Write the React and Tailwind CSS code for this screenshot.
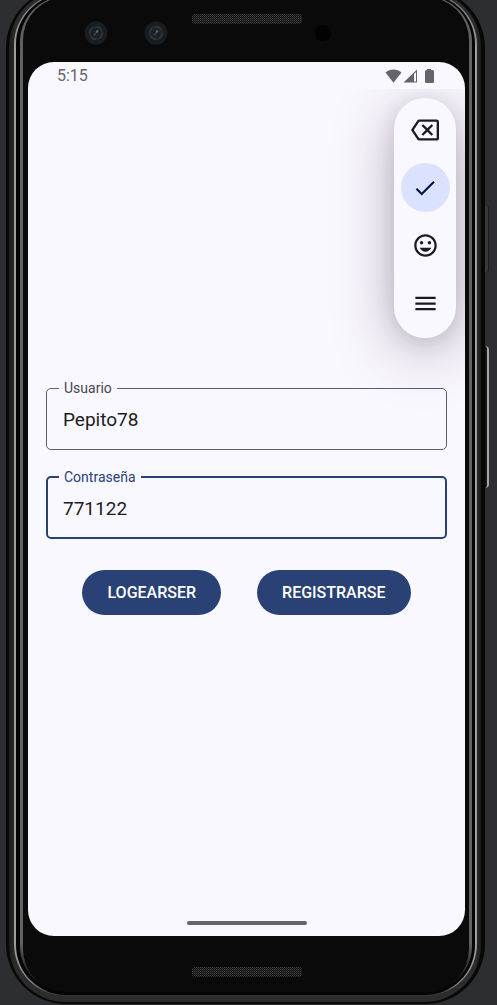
import { useState } from "react";
import { MdOutlineBackspace, MdCheck, MdMood, MdMenu } from "react-icons/md";

function CameraLens() {
  return (
    <svg className="size-6" viewBox="0 0 24 24" aria-hidden="true">
      <circle cx="12" cy="12" r="11.5" fill="#171d21" />
      <circle cx="12" cy="12" r="7.5" fill="#24282b" />
      <circle cx="12" cy="12" r="6.5" fill="none" stroke="#3c3e42" strokeWidth="1" strokeDasharray="6 4" />
      <circle cx="12" cy="12" r="4.5" fill="#1b1e22" />
      <path d="M10 14.5 14 9.5" stroke="#3c424c" strokeWidth="1.5" />
      <circle cx="13" cy="10.5" r="1.2" fill="#5d6574" />
    </svg>
  );
}

function Speaker() {
  return (
    <svg className="h-2.5 w-[110px]" aria-hidden="true">
      <defs>
        <pattern id="mesh" width="2" height="2" patternUnits="userSpaceOnUse">
          <rect width="2" height="2" fill="#101010" />
          <rect width="1" height="1" fill="#444444" />
          <rect x="1" y="1" width="1" height="1" fill="#2c2c2c" />
        </pattern>
      </defs>
      <rect width="110" height="10" rx="3" fill="url(#mesh)" />
    </svg>
  );
}

function StatusBar() {
  return (
    <div className="flex h-[27px] items-center justify-between pr-[30px] pl-[29px] text-[#656469]">
      <span className="text-[16px] leading-5">5:15</span>
      <svg className="h-3.5 w-[50px]" viewBox="0 0 50 14" fill="currentColor" aria-hidden="true">
        <path d="M0.5 3.6C4.8-.6 12.200-.6 16.500 3.600L8.500 13.700Z" />
        <path d="M18.500 13.500 32 0.500V13.500ZM29 5V12.500H31V3Z" fillRule="evenodd" />
        <path d="M42 0H46V1H47.500Q49 1 49 2.500V12.500Q49 14 47.500 14H41.500Q40 14 40 12.500V2.500Q40 1 41.500 1H42Z" />
      </svg>
    </div>
  );
}

function KeyboardToolbar() {
  return (
    <div
      role="toolbar"
      aria-label="Teclado"
      className="absolute top-[9px] right-[9px] z-10 flex w-[62px] flex-col items-center gap-[9px] rounded-full bg-[#faf8ff] pt-[7px] pb-[10px] text-[#1a1b21] shadow-[0_12px_60px_rgba(50,30,50,0.34),0_4px_20px_rgba(50,30,50,0.12)]"
    >
      <button type="button" aria-label="Borrar" className="flex size-[49px] items-center justify-center rounded-full">
        <MdOutlineBackspace className="size-7" />
      </button>
      <button type="button" aria-label="Aceptar" className="flex size-[49px] items-center justify-center rounded-full bg-[#dae2ff] text-[#001848]">
        <MdCheck className="size-[26px]" />
      </button>
      <button type="button" aria-label="Emoji" className="flex size-[49px] items-center justify-center rounded-full">
        <MdMood className="size-[27px]" />
      </button>
      <button type="button" aria-label="Menú" className="flex size-[49px] items-center justify-center rounded-full">
        <MdMenu className="size-[27px]" />
      </button>
    </div>
  );
}

function OutlinedField({ id, label, value, onChange, active }) {
  return (
    <fieldset
      className={
        active
          ? "min-w-0 rounded-[5px] border-2 border-[#294174] px-[15px] pb-[7px]"
          : "min-w-0 rounded-[5px] border border-[#5f5e66] px-4 pb-2"
      }
    >
      <legend className="-ml-1 px-[5px] text-[14px] leading-[18px]">
        <label htmlFor={id} className={active ? "block text-[#294174]" : "block text-[#45464f]"}>
          {label}
        </label>
      </legend>
      <input
        id={id}
        type="text"
        value={value}
        onChange={(e) => onChange(e.target.value)}
        className="block h-11 w-full bg-transparent text-[19px] leading-6 text-[#1a1b21] outline-none"
      />
    </fieldset>
  );
}

function PillButton({ children }) {
  return (
    <button type="submit" className="h-[45px] rounded-full bg-[#294174] px-[25px] text-[16px] leading-5 font-medium text-white">
      {children}
    </button>
  );
}

function LoginScreen() {
  const [user, setUser] = useState("Pepito78");
  const [password, setPassword] = useState("771122");
  return (
    <div className="flex flex-1 flex-col overflow-hidden rounded-[26px] bg-[#faf8ff]">
      <StatusBar />
      <div className="relative flex flex-1 flex-col justify-center overflow-hidden px-[18px]">
        <form onSubmit={(e) => e.preventDefault()} className="flex flex-col gap-[18px]">
          <OutlinedField id="usuario" label="Usuario" value={user} onChange={setUser} />
          <OutlinedField id="contrasena" label="Contraseña" value={password} onChange={setPassword} active />
          <div className="flex justify-center gap-9 pt-[13px]">
            <PillButton>LOGEARSER</PillButton>
            <PillButton>REGISTRARSE</PillButton>
          </div>
        </form>
        <KeyboardToolbar />
      </div>
      <div className="flex h-[31px] items-start justify-center pt-4">
        <div className="h-1 w-[120px] rounded-full bg-[#656469]" />
      </div>
    </div>
  );
}

export default function App() {
  return (
    <main className="flex min-h-screen flex-col overflow-hidden bg-[#2d2e32] font-[Roboto,sans-serif]">
      <div className="relative -mt-3 mr-3 mb-px ml-1.5 flex flex-1 flex-col rounded-[60px] bg-[#080808] pt-0.5 pr-1 pb-0.5 pl-[3px]">
        <div className="absolute top-[217px] -right-1 h-[68px] w-1 rounded-r-sm border-r border-[#1c1c1e] bg-[#38393b]" />
        <div className="absolute top-[358px] -right-1 h-[142px] w-1 rounded-r-sm border-r-2 border-[#a8a6a4] bg-[#161617]" />
        <div className="flex flex-1 flex-col rounded-[57px] bg-[linear-gradient(to_right,#1c1c1c,#2c2c2c_6px,#2c2c2c_calc(100%-6px),#1c1c1c)] pt-[3px] pr-1 pb-[6px] pl-[5px]">
          <div className="flex flex-1 flex-col rounded-[52px] bg-[linear-gradient(#77777a,#a09e9c_60px,#a09e9c_calc(100%-60px),#8a8886_calc(100%-12px),#303030)] px-0.5 pt-px pb-px">
            <div className="flex flex-1 flex-col rounded-[50px] bg-[#050505] pt-0.5 pr-[3px] pb-[3px] pl-1">
              <div className="flex flex-1 flex-col rounded-[46px] bg-[linear-gradient(#5e5e62,#626166_60px,#626166_calc(100%-50px),#0a0a0a_calc(100%-6px))] px-[3px] pt-px">
                <div className="flex flex-1 flex-col rounded-[43px] bg-[#0a0a0a] pr-1 pl-[5px]">
                  <div className="grid h-[65px] grid-cols-[1fr_110px_1fr] items-start">
                    <div className="flex justify-end gap-9 pt-6 pr-6">
                      <CameraLens />
                      <CameraLens />
                    </div>
                    <div className="flex pt-[17px]">
                      <Speaker />
                    </div>
                    <div className="pt-7 pl-[13px]">
                      <div className="size-4 rounded-full bg-[#020204]" />
                    </div>
                  </div>
                  <LoginScreen />
                  <div className="flex h-14 justify-center pt-[31px]">
                    <Speaker />
                  </div>
                </div>
              </div>
            </div>
          </div>
        </div>
      </div>
    </main>
  );
}
